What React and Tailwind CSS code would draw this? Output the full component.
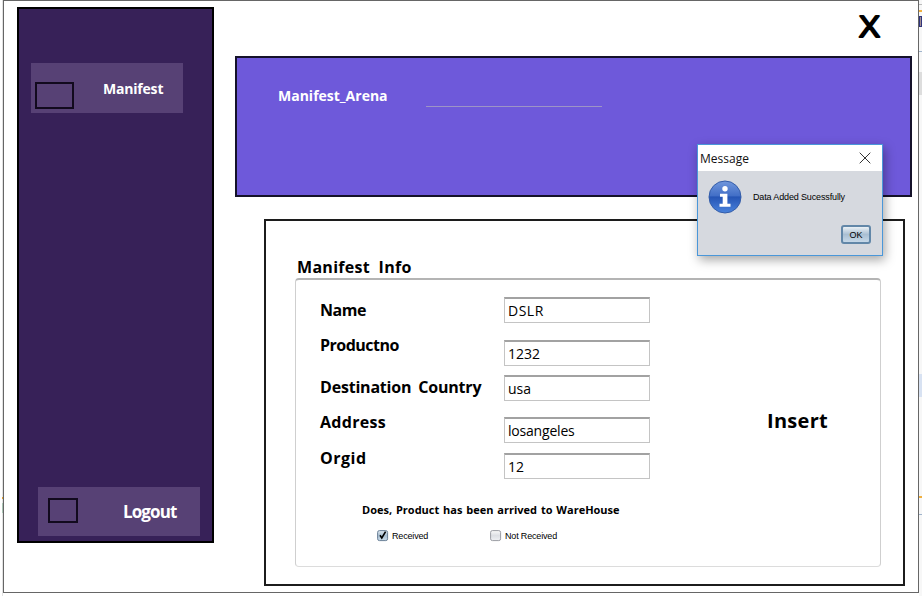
import React from "react";

const hand = "font-['Comic_Sans_MS','Open_Sans',sans-serif] whitespace-nowrap";

const labels = [
  { text: "Name", cls: "tracking-[-0.5px]" },
  { text: "Productno", cls: "mt-[11px] tracking-[-0.5px]" },
  { text: "Destination Country", cls: "mt-[18px] tracking-[-0.2px] [word-spacing:3px]" },
  { text: "Address", cls: "mt-[11px] tracking-[0.3px]" },
  { text: "Orgid", cls: "mt-[12px] tracking-[0.5px]" },
];

const fields = [
  { value: "DSLR", cls: "tracking-[0.5px]" },
  { value: "1232", cls: "mt-[17px]" },
  { value: "usa", cls: "mt-[9px]" },
  { value: "losangeles", cls: "mt-[16px] tracking-[-0.2px]" },
  { value: "12", cls: "mt-[10px]" },
];

function Sidebar() {
  return (
    <aside className="ml-[13px] mt-[6px] flex h-[536px] w-[197px] shrink-0 flex-col justify-between border-2 border-black bg-[#372158]">
      <div className="ml-3 mt-[54px] flex h-[50px] w-[152px] bg-[#574175]">
        <div className="ml-1 mt-[19px] h-[27px] w-[39px] border-2 border-[#120a1e]" />
        <span className={`${hand} ml-[29px] mt-[14px] text-[14px] font-bold leading-[24px] tracking-[-0.2px] text-white`}>Manifest</span>
      </div>
      <div className="mb-[5px] ml-[19px] flex h-[49px] w-[162px] bg-[#574175]">
        <div className="ml-[10px] mt-[11px] h-[25px] w-[30px] border-2 border-[#120a1e]" />
        <span className={`${hand} ml-[45px] mt-[13px] text-[17px] font-bold leading-[24px] tracking-[-0.9px] text-white`}>Logout</span>
      </div>
    </aside>
  );
}

function Check({ checked }) {
  return (
    <svg width="12" height="12" viewBox="0 0 12 12" className="shrink-0">
      <defs>
        <linearGradient id={checked ? "on" : "off"} x1="0" y1="0" x2="0" y2="1">
          <stop offset="0" stopColor={checked ? "#dfe8f0" : "#fafafa"} />
          <stop offset="0.5" stopColor={checked ? "#a9bfd2" : "#dddfe4"} />
          <stop offset="1" stopColor={checked ? "#cbdcea" : "#f0f1f4"} />
        </linearGradient>
      </defs>
      <rect x="0.6" y="0.6" width="10" height="10" rx="1.8" fill={`url(#${checked ? "on" : "off"})`} stroke={checked ? "#6b8198" : "#9a9ca3"} />
      {checked && <path d="M3 5.2 L4.8 8 L8.6 1.6" fill="none" stroke="#000" strokeWidth="1.6" />}
    </svg>
  );
}

function ManifestForm() {
  return (
    <section className="ml-[29px] mt-[22px] h-[367px] w-[641px] border-2 border-[#1c1c1c] pl-[29px] pt-[34px]">
      <h2 className={`${hand} ml-[2px] h-[23px] text-[16px] font-bold leading-[24px] tracking-[0.3px] text-black [word-spacing:4px]`}>Manifest Info</h2>
      <div className="flex h-[289px] w-[586px] flex-col rounded-[4px] border border-t-2 border-[#cfcfcf] border-b-[#dcdcdc] border-t-[#b4b4b4] pt-[17px]">
        <div className="flex h-[182px]">
          <div className="ml-[24px] mt-[1px] w-[184px]">
            {labels.map((l) => (
              <div key={l.text} className={`${hand} h-6 text-[16px] font-bold leading-[24px] text-black ${l.cls}`}>{l.text}</div>
            ))}
          </div>
          <div className="w-[146px]">
            {fields.map((f) => (
              <div key={f.value} className={`${hand} h-[26px] border border-[#c4c4c4] border-t-2 border-t-[#a2a2a2] bg-white pl-[3px] text-[14px] leading-[23px] text-black ${f.cls}`}>{f.value}</div>
            ))}
          </div>
          <button className={`${hand} ml-[117px] mt-[111px] h-[26px] text-[20px] font-bold leading-[26px] tracking-[0.3px] text-black`}>Insert</button>
        </div>
        <p className={`${hand} ml-[66px] mt-[22px] text-[11px] font-bold leading-[18px] text-black [word-spacing:1px]`}>Does, Product has been arrived to WareHouse</p>
        <div className="ml-[81px] mt-[11px] flex h-3 items-center font-['Liberation_Sans',sans-serif] text-[9px] leading-[12px] tracking-[-0.17px] text-black">
          <label className="flex w-[113px] items-center gap-[3px]"><Check checked />Received</label>
          <label className="flex items-center gap-[3px]"><Check />Not Received</label>
        </div>
      </div>
    </section>
  );
}

function MessageDialog() {
  return (
    <div className="absolute left-[697px] top-[144px] h-[112px] w-[186px] border border-[#4a97d9] bg-[#d6d9df] shadow-[2px_4px_10px_rgba(0,0,0,0.35)]">
      <div className="flex h-[26px] items-center justify-between bg-white pl-[2px] pr-[11px]">
        <span className="pt-[2px] font-['Open_Sans',sans-serif] text-[12px] leading-[20px] text-[#111]">Message</span>
        <svg width="12" height="12" viewBox="0 0 12 12"><path d="M.7.7 11.3 11.3M11.3.7.7 11.3" stroke="#333" strokeWidth="1" /></svg>
      </div>
      <div className="flex pl-[10px] pt-[9px]">
        <svg width="34" height="34" viewBox="0 0 34 34">
          <defs>
            <linearGradient id="info" x1="0" y1="0" x2="0" y2="1">
              <stop offset="0" stopColor="#7197dc" />
              <stop offset="0.46" stopColor="#426fc7" />
              <stop offset="0.5" stopColor="#2655b5" />
              <stop offset="1" stopColor="#4a83dc" />
            </linearGradient>
          </defs>
          <circle cx="17" cy="17" r="16" fill="url(#info)" stroke="#345da9" />
          <circle cx="17" cy="8.8" r="2.7" fill="#fff" />
          <path d="M12 13.7h7.4v10h3.1v3H11.5v-3h3.2v-7H12z" fill="#fff" />
        </svg>
        <span className="ml-[11px] mt-[11px] whitespace-nowrap font-['Liberation_Sans',sans-serif] text-[9px] leading-[12px] tracking-[-0.14px] text-black">Data Added Sucessfully</span>
      </div>
      <button className="ml-[143px] mt-[11px] flex h-[19px] w-[30px] items-center justify-center rounded-[3px] border-2 border-[#6287a8] bg-linear-to-b from-[#eaf0f5] via-[#a9bfd2] to-[#c6d8e8] font-['Liberation_Sans',sans-serif] text-[9px] leading-[12px] text-black">OK</button>
    </div>
  );
}

export default function App() {
  return (
    <div className="relative flex h-[596px] w-[924px] overflow-hidden bg-white">
      <div className="ml-[2px] w-px shrink-0 bg-[#e2e2e2]">
        <div className="mt-[497px] h-[2px] bg-[#e0a030]" />
        <div className="mt-[4px] h-[10px] bg-[#a9c4b4]" />
      </div>
      <main className="flex h-[593px] w-[916px] shrink-0 border border-[#666]">
        <Sidebar />
        <div className="ml-[21px] flex flex-col">
          <div className="flex h-[55px] justify-end">
            <svg width="40" height="50" viewBox="-5 -5 40 50" className="mr-[22px] mt-px overflow-visible">
              <text x="14.5" y="29.6" textAnchor="middle" textLength="20" lengthAdjust="spacingAndGlyphs" fontFamily="'Open Sans', sans-serif" fontSize="30" stroke="#000" strokeWidth="1.8" strokeLinejoin="round">X</text>
            </svg>
          </div>
          <header className="flex h-[141px] w-[677px] border-2 border-[#15122a] bg-[#6e59da]">
            <h1 className={`${hand} ml-[41px] mt-[26px] w-[148px] text-[14px] font-bold leading-[24px] text-white`}>Manifest_Arena</h1>
            <div className="mt-[48px] h-px w-[176px] bg-[#9d94c6]" />
          </header>
          <ManifestForm />
        </div>
      </main>
      <div className="w-[3px] shrink-0 bg-[#f7f7f7]">
        <div className="mt-[4px] h-px bg-[#bbb]" />
        <div className="mt-[5px] h-[2px] bg-[#f0b040]" />
        <div className="mt-[4px] h-[11px] border border-[#30357c] bg-[#a08c90]" />
        <div className="mt-[24px] h-px bg-[#a0b4cc]" />
        <div className="mt-[20px] h-[23px] bg-[#ddd]" />
        <div className="mt-[279px] h-[23px] bg-[#d8e2f2]" />
        <div className="mt-[99px] h-[2px] bg-[#f0b040]" />
        <div className="mt-[16px] h-px bg-[#a0b4cc]" />
      </div>
      <MessageDialog />
    </div>
  );
}
